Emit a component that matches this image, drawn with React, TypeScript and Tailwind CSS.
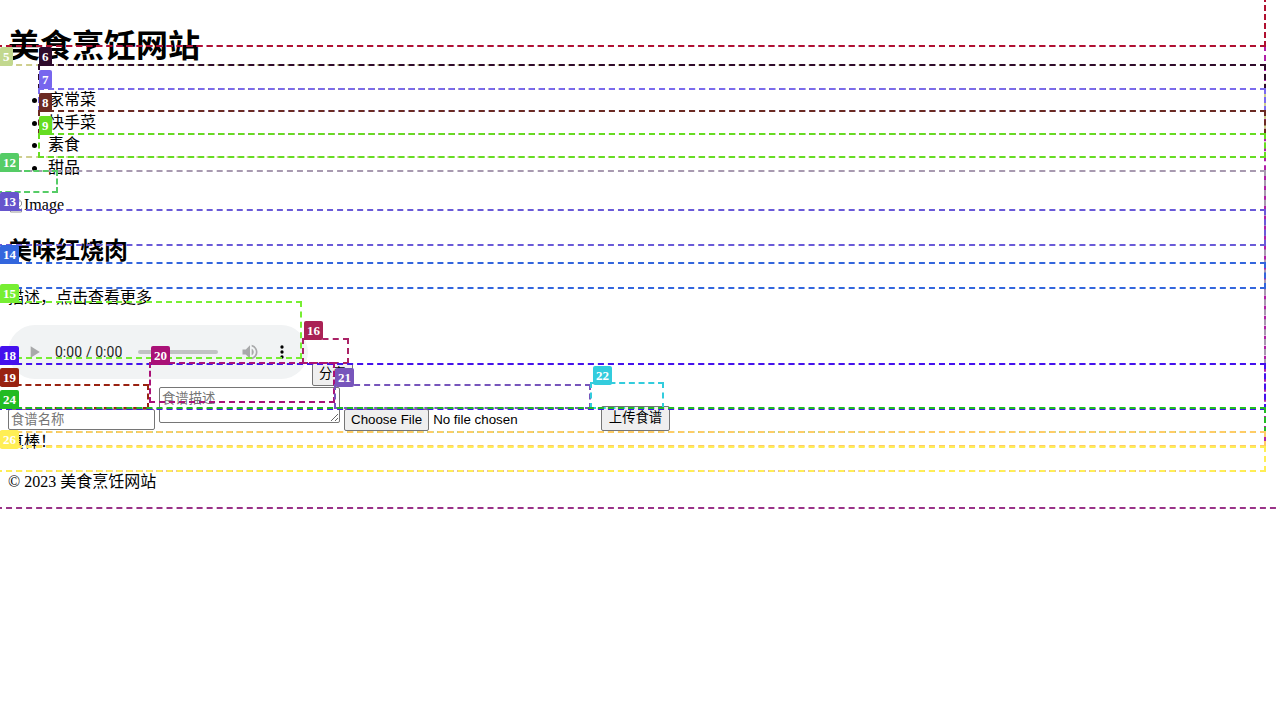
import React from 'react';

// debug overlay boxes (outline of each element, drawn over the page)
const boxes: string[] = [
  'left-[-4px] top-[-4px] w-[1300px] h-[513px] border-[#993388]',
  'left-[-4px] top-[45px] w-[1270px] h-[427px] border-[#b01fa8]',
  'left-[-4px] top-[-4px] w-[1270px] h-[51px] border-[#b01030]',
  'left-[-4px] top-[64px] w-[1270px] h-[94px] border-[#cfcf8f]',
  'left-[38px] top-[64px] w-[1228px] h-[26px] border-[#2e0b2b]',
  'left-[38px] top-[88px] w-[1228px] h-[24px] border-[#7b6bee]',
  'left-[38px] top-[110px] w-[1228px] h-[25px] border-[#6b2a22]',
  'left-[38px] top-[133px] w-[1228px] h-[25px] border-[#66dd22]',
  'left-[-4px] top-[170px] w-[1270px] h-[195px] border-[#a89ab0]',
  'left-[-4px] top-[170px] w-[62px] h-[23px] border-[#55cc66]',
  'left-[-4px] top-[209px] w-[1270px] h-[37px] border-[#6a5ad8]',
  'left-[-4px] top-[262px] w-[1270px] h-[27px] border-[#3366dd]',
  'left-[-4px] top-[301px] w-[306px] h-[58px] border-[#77ee33]',
  'left-[302px] top-[338px] w-[47px] h-[26px] border-[#aa2266]',
  'left-[-4px] top-[363px] w-[1270px] h-[47px] border-[#4411ee]',
  'left-[-4px] top-[384px] w-[153px] h-[25px] border-[#992211]',
  'left-[149px] top-[362px] w-[186px] h-[41px] border-[#aa1177]',
  'left-[334px] top-[384px] w-[257px] h-[25px] border-[#7755bb]',
  'left-[590px] top-[382px] w-[74px] h-[27px] border-[#33ccdd]',
  'left-[-4px] top-[407px] w-[1270px] h-[26px] border-[#22bb22]',
  'left-[-4px] top-[431px] w-[1270px] h-[16px] border-[#ffcc66]',
  'left-[-4px] top-[446px] w-[1270px] h-[26px] border-[#ffee55]',
];

const labels = [
  { n: '5', cls: 'left-[0px] top-[47px] bg-[#c2d88e]' },
  { n: '6', cls: 'left-[39px] top-[47px] bg-[#2e0b2b]' },
  { n: '7', cls: 'left-[39px] top-[70px] bg-[#7766ee]' },
  { n: '8', cls: 'left-[39px] top-[93px] bg-[#6b2a22]' },
  { n: '9', cls: 'left-[39px] top-[116px] bg-[#66dd22]' },
  { n: '12', cls: 'left-[0px] top-[153px] bg-[#55cc66]' },
  { n: '13', cls: 'left-[0px] top-[192px] bg-[#6655cc]' },
  { n: '14', cls: 'left-[0px] top-[245px] bg-[#3366dd]' },
  { n: '15', cls: 'left-[0px] top-[284px] bg-[#77ee33]' },
  { n: '16', cls: 'left-[304px] top-[321px] bg-[#aa2255]' },
  { n: '18', cls: 'left-[0px] top-[346px] bg-[#4411ee]' },
  { n: '19', cls: 'left-[0px] top-[368px] bg-[#992211]' },
  { n: '20', cls: 'left-[151px] top-[346px] bg-[#aa1177]' },
  { n: '21', cls: 'left-[335px] top-[368px] bg-[#7755bb]' },
  { n: '22', cls: 'left-[593px] top-[366px] bg-[#33ccdd]' },
  { n: '24', cls: 'left-[0px] top-[390px] bg-[#22bb22]' },
  { n: '26', cls: 'left-[0px] top-[430px] bg-[#ffee55]' },
];

const categories = ['家常菜', '快手菜', '素食', '甜品'];

const BrokenImage = () => (
  <svg width="16" height="16" viewBox="0 0 16 16" className="shrink-0">
    <path d="M2 1.5h8l3.5 3.5v3l-2 1.5-2-1.5-2 1.5-2-1.5-2 1.5-1.5-1z" fill="#fff" stroke="#9a9a9a" />
    <path d="M2.5 11l2 1.5 2-1.5 2 1.5 2-1.5 2 1.5 1-.8v3.3h-11z" fill="#fff" stroke="#9a9a9a" />
    <path d="M3 7l2-2 2 2 2-1.5" fill="none" stroke="#4caf50" />
    <circle cx="10.5" cy="4.5" r="1" fill="#3b82c4" />
  </svg>
);

export default function App() {
  return (
    <div className="relative w-full min-h-[720px] overflow-hidden bg-white text-black">
      <div className="flex flex-col px-2 text-[16px] font-['Liberation_Serif','Noto_Sans_CJK_SC',serif]">
        <h1 className="mt-[22px] h-[48px] text-[32px] font-bold leading-[48px]">美食烹饪网站</h1>

        <ul className="mt-[19px] list-disc pl-[40px]">
          {categories.map((c) => (
            <li key={c} className="h-[22.5px] leading-[22.5px]">
              {c}
            </li>
          ))}
        </ul>

        <div className="mt-[15px] flex h-[21px] items-center">
          <BrokenImage />
          <span className="leading-[21px]">Image</span>
        </div>

        <h2 className="mt-[17.5px] h-[36px] text-[24px] font-bold leading-[36px]">美味红烧肉</h2>
        <p className="mt-[18px] h-[22px] leading-[22px]">描述，点击查看更多</p>

        <div className="mt-[16px] flex h-[60px] items-start">
          <audio controls className="h-[54px] w-[300px]" />
          <button className="ml-[4px] mt-[38px] h-[23px] rounded-[2px] border border-[#767676] bg-[#efefef] px-[6px] text-[13.33px] leading-[20px] font-['Liberation_Sans','Noto_Sans_CJK_SC',sans-serif]">
            分享
          </button>
        </div>

        <form className="mt-[2px] flex h-[44px] items-start" onSubmit={(e) => e.preventDefault()}>
          <input
            type="text"
            placeholder="食谱名称"
            className="mt-[22px] h-[21px] w-[147px] rounded-[2px] border border-[#767676] bg-white px-[2px] text-[13.33px] font-['Liberation_Sans','Noto_Sans_CJK_SC',sans-serif] placeholder:text-[#757575]"
          />
          <textarea
            placeholder="食谱描述"
            className="ml-[4px] h-[36px] w-[181px] rounded-[2px] border border-[#767676] bg-white px-[2px] pt-[3px] text-[13.33px] leading-[16px] font-['Liberation_Sans','Noto_Sans_CJK_SC',sans-serif] placeholder:text-[#757575]"
          />
          <input
            type="file"
            className="ml-[4px] mt-[22px] h-[22px] w-[253px] text-[13.33px] font-['Liberation_Sans','Noto_Sans_CJK_SC',sans-serif] file:mr-[4px] file:h-[22px] file:rounded-[2px] file:border file:border-[#767676] file:bg-[#efefef] file:px-[6px] file:text-black"
          />
          <button
            type="submit"
            className="ml-[4px] mt-[19px] h-[25px] w-[69px] rounded-[2px] border border-[#767676] bg-[#efefef] px-[6px] text-[13.33px] leading-[20px] font-['Liberation_Sans','Noto_Sans_CJK_SC',sans-serif]"
          >
            上传食谱
          </button>
        </form>

        <p className="h-[22px] leading-[22px]">真棒！</p>

        <footer className="mt-[18px] h-[22px] leading-[22px]">© 2023 美食烹饪网站</footer>
      </div>

      {/* overlay */}
      <div className="pointer-events-none absolute inset-0">
        {boxes.map((b, i) => (
          <div key={i} className={`absolute border-2 border-dashed ${b}`} />
        ))}
        {labels.map((l) => (
          <div
            key={l.n}
            className={`absolute h-[19px] rounded-[2px] px-[3px] text-[13px] font-bold leading-[19px] text-white font-['Liberation_Serif',serif] ${l.cls}`}
          >
            {l.n}
          </div>
        ))}
      </div>
    </div>
  );
}
